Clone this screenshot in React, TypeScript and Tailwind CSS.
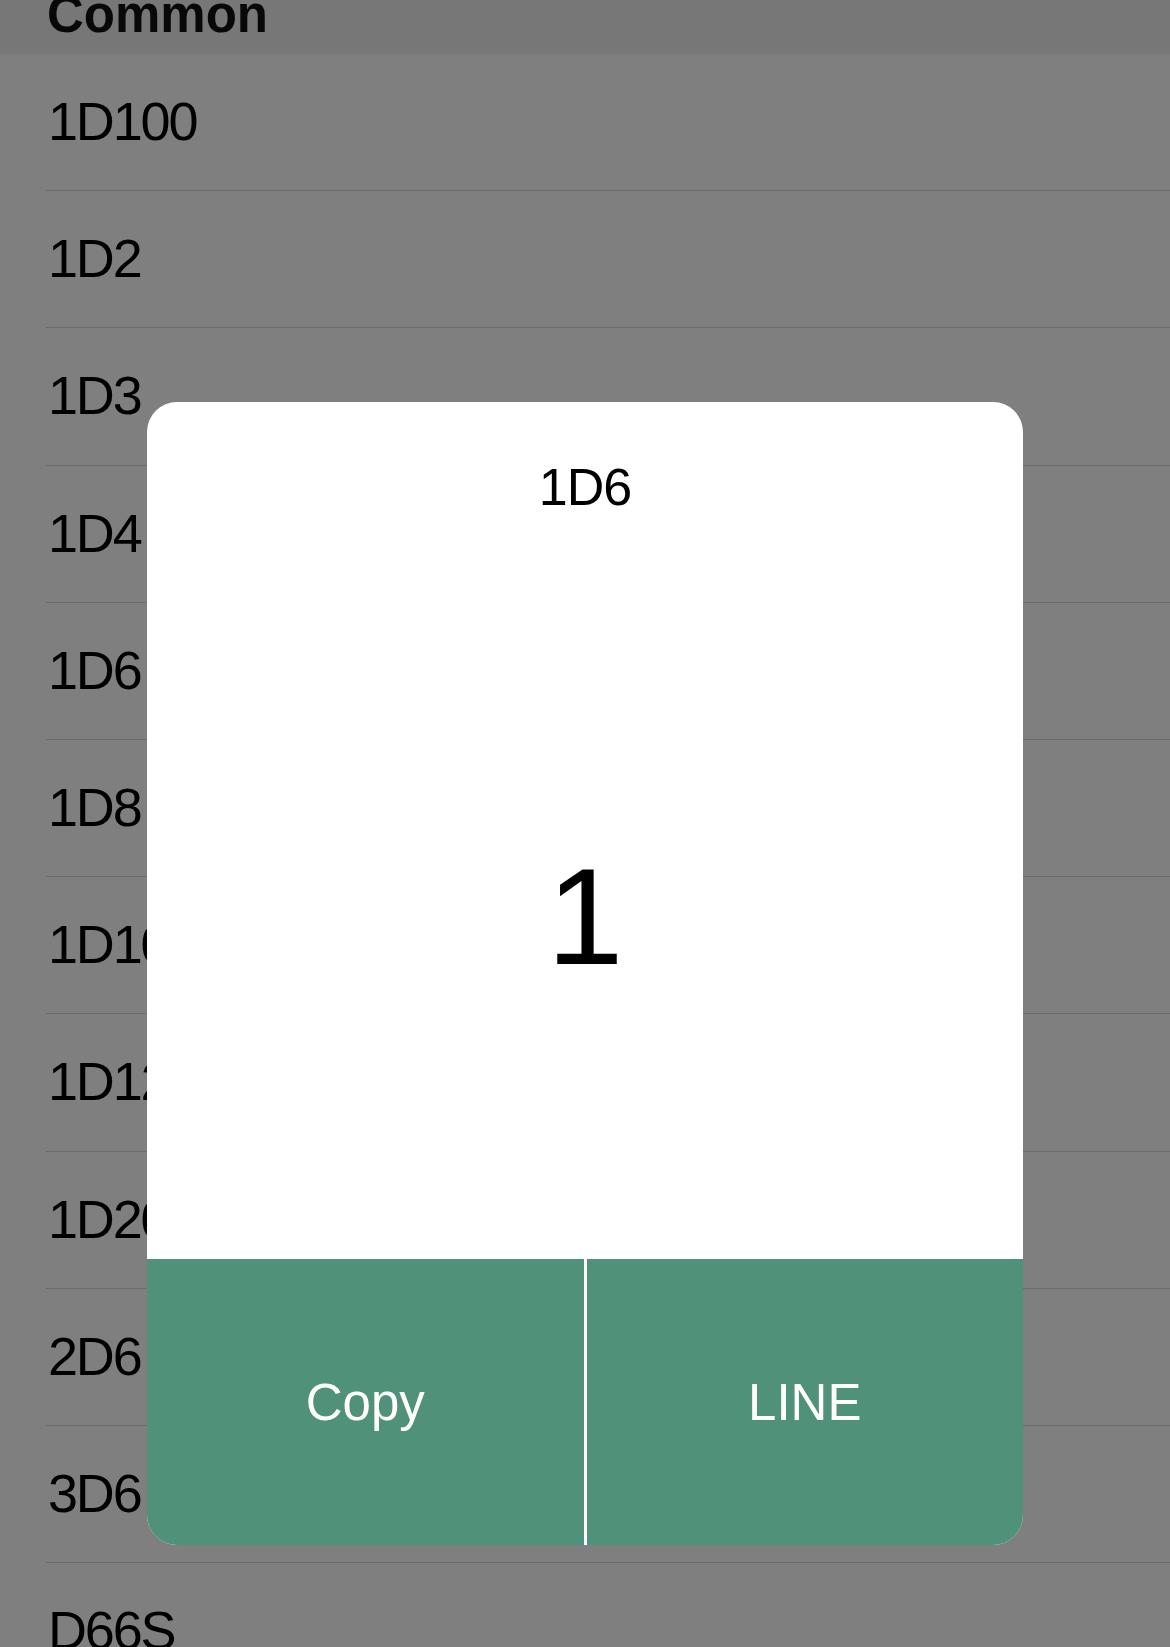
import React from 'react';

const ROWS = ['1D100', '1D2', '1D3', '1D4', '1D6', '1D8', '1D10', '1D12', '1D20', '2D6', '3D6', 'D66S'];

const font = { fontFamily: '"Liberation Sans", Arial, sans-serif' };

export default function App() {
  return (
    <div className="relative h-[1647px] w-full overflow-hidden bg-white" style={font}>
      {/* section header, partly scrolled off */}
      <div className="h-[54px] overflow-hidden bg-[#eeeeee] pl-[47px]">
        <div className="-mt-[11px] text-[51px] font-bold leading-[51px] text-[#111]">Common</div>
      </div>

      {/* dice list */}
      <div className="flex flex-col">
        {ROWS.map((r) => (
          <div key={r} className="h-[137.2px] shrink-0 pl-[46px]">
            <div className="flex h-full items-center border-b border-[#d6d6d6]">
              <span className="ml-[2px] -mt-[2px] text-[54px] leading-none tracking-[-0.04em] text-black">{r}</span>
            </div>
          </div>
        ))}
      </div>

      {/* dim overlay + result dialog */}
      <div className="absolute inset-0 flex justify-center bg-black/50 pt-[402px]">
        <div className="flex h-[1143px] w-[876px] flex-col overflow-hidden rounded-[30px] bg-white">
          <div className="flex h-[170px] shrink-0 items-center justify-center">
            <span className="text-[52px] leading-none tracking-[-0.02em] text-black">1D6</span>
          </div>
          <div className="flex flex-1 items-center justify-center">
            <span className="text-[138px] leading-none text-black">1</span>
          </div>
          <div className="flex h-[286px] shrink-0 gap-[3px]">
            <button className="flex flex-1 items-center justify-center bg-[#50917a] text-[51px] leading-none text-white">
              Copy
            </button>
            <button className="flex flex-1 items-center justify-center bg-[#50917a] text-[51px] leading-none text-white">
              LINE
            </button>
          </div>
        </div>
      </div>
    </div>
  );
}
